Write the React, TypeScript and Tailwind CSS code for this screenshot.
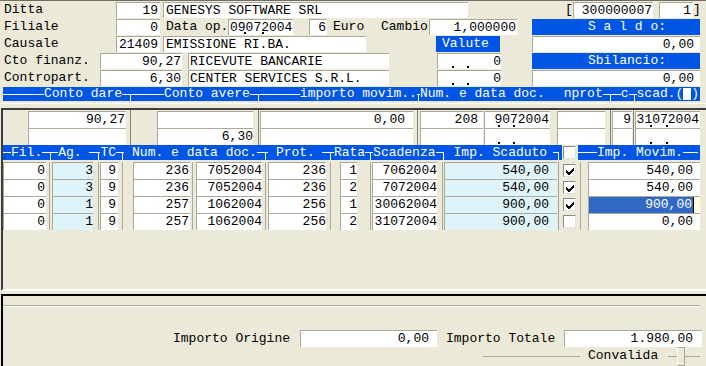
import React from "react";

type P = { className?: string; children?: React.ReactNode };

const BLUE = "bg-[#0055e5]";

function Row({ children }: P) {
  return <div className="flex h-[17px]">{children}</div>;
}

function Label({ className = "", children }: P) {
  return <div className={`h-[16px] shrink-0 whitespace-pre leading-[16px] ${className}`}>{children}</div>;
}

function Box({ className = "", h = "h-[16px]", children }: P & { h?: string }) {
  return (
    <div
      className={`relative shrink-0 whitespace-pre border-l border-t border-[#aca899] bg-white leading-[15px] ${h} ${className}`}
    >
      {children}
    </div>
  );
}

function Bar({ className = "", children }: P) {
  return (
    <div className={`h-[16px] w-[168px] shrink-0 whitespace-pre pl-[56px] leading-[16px] text-white ${BLUE} ${className}`}>
      {children}
    </div>
  );
}

// puntini della maschera data
function Dot({ className }: { className: string }) {
  return <span className={`absolute bottom-[1px] h-[2px] w-[2px] bg-black ${className}`} />;
}

// pezzi delle intestazioni di griglia
function Ln({ className = "" }: { className?: string }) {
  return <div className={`h-px shrink-0 self-center bg-white ${className}`} />;
}
function Tk() {
  return <div className="mt-[7px] w-px shrink-0 self-stretch bg-white" />;
}
function Tx({ children }: P) {
  return <span className="shrink-0 whitespace-pre">{children}</span>;
}
function Sp({ className }: { className: string }) {
  return <div className={`shrink-0 ${className}`} />;
}

function Check({ on }: { on?: boolean }) {
  return (
    <div className="flex h-[13px] w-[13px] items-center justify-center border border-[#8a8a8a] border-b-[#e2e2e2] border-r-[#e2e2e2] bg-white">
      {on ? (
        <svg width="8" height="8" viewBox="0 0 7 7" shapeRendering="crispEdges">
          <path d="M0 2.6 L2.4 5 L7 0.4 L7 2.8 L2.4 7.3 L0 4.9 Z" fill="black" />
        </svg>
      ) : null}
    </div>
  );
}

function MCell({ className = "", children }: P) {
  return (
    <div
      className={`relative h-[17px] shrink-0 whitespace-pre border-l border-t border-[#aca899] bg-white text-right leading-[16px] ${className}`}
    >
      {children}
    </div>
  );
}

function Gap({ className, pre }: { className: string; pre: string }) {
  return (
    <div className={`flex shrink-0 ${className}`}>
      <div className={`shrink-0 ${pre}`} />
      <div className="w-px bg-[#aca899]" />
    </div>
  );
}

function C({ className = "", bg = "bg-white", children }: P & { bg?: string }) {
  return (
    <div
      className={`h-[17px] shrink-0 whitespace-pre border-l border-t border-[#aca899] text-right leading-[16px] ${bg} ${className}`}
    >
      {children}
    </div>
  );
}

type Rata = {
  ag: string;
  num: string;
  data: string;
  prot: string;
  rata: string;
  scad: string;
  imp: string;
  chk: boolean;
  mov: string;
  sel?: boolean;
};

const rate: Rata[] = [
  { ag: "3", num: "236", data: "7052004", prot: "236", rata: "1", scad: "7062004", imp: "540,00", chk: true, mov: "540,00" },
  { ag: "3", num: "236", data: "7052004", prot: "236", rata: "2", scad: "7072004", imp: "540,00", chk: true, mov: "540,00" },
  { ag: "1", num: "257", data: "1062004", prot: "256", rata: "1", scad: "30062004", imp: "900,00", chk: true, mov: "900,00", sel: true },
  { ag: "1", num: "257", data: "1062004", prot: "256", rata: "2", scad: "31072004", imp: "900,00", chk: false, mov: "0,00" },
];

const CYAN = "bg-[#dff4f9]";

function RataRow({ r }: { r: Rata }) {
  return (
    <div className="flex h-[17px]">
      <C className="w-[43px] pr-[1px]">0</C>
      <Gap className="w-[6px]" pre="w-[3px]" />
      <C className="w-[41px]" bg={CYAN}>
        {r.ag}
      </C>
      <Gap className="w-[7px]" pre="w-[5px]" />
      <C className="w-[18px] pr-[2px]">9</C>
      <Gap className="w-[15px]" pre="w-[4px]" />
      <C className="w-[57px] pr-[1px]">{r.num}</C>
      <Gap className="w-[6px]" pre="w-[2px]" />
      <C className="w-[66px]">{r.data}</C>
      <Gap className="w-[6px]" pre="w-[3px]" />
      <C className="w-[58px]">{r.prot}</C>
      <Gap className="w-[14px]" pre="w-[4px]" />
      <C className="w-[17px]">{r.rata}</C>
      <Gap className="w-[15px]" pre="w-[13px]" />
      <C className="w-[65px]">{r.scad}</C>
      <Gap className="w-[7px]" pre="w-[5px]" />
      <C className="w-[113px] pr-[8px]" bg={CYAN}>
        {r.imp}
      </C>
      <Gap className="w-[5px]" pre="w-[1px]" />
      <div className="w-[16px] shrink-0 pl-[1px] pt-[2px]">
        <Check on={r.chk} />
      </div>
      <Gap className="w-[10px]" pre="w-[2px]" />
      {r.sel ? (
        <div className="flex h-[17px] w-[112px] shrink-0 border-l border-t border-[#aca899]">
          <div className="w-[104px] bg-[#316ac5] pr-[1px] text-right leading-[16px] text-white">{r.mov}</div>
          <div className="w-px bg-black" />
          <div className="flex-1 bg-[#ffffe1]" />
        </div>
      ) : (
        <C className="w-[112px] pr-[7px]">{r.mov}</C>
      )}
    </div>
  );
}

export default function App() {
  return (
    <div className="h-[366px] w-[706px] overflow-hidden border-t border-[#716f64] bg-[#ece9d8] font-['Liberation_Mono',monospace] text-[13px] text-black">
      {/* testata */}
      <div className="pt-px">
        <Row>
          <Label className="w-[116px] pl-[4px]">Ditta</Label>
          <Box className="w-[44px] pr-[2px] text-right">19</Box>
          <Box className="ml-[3px] w-[305px] pl-[2px]">GENESYS SOFTWARE SRL</Box>
          <Label className="ml-[97px] w-[8px]">[</Label>
          <Box className="w-[80px] pr-[1px] text-right">300000007</Box>
          <Box className="ml-[6px] w-[34px] pr-[2px] text-right">1</Box>
          <Label className="w-[8px]">]</Label>
        </Row>
        <Row>
          <Label className="w-[116px] pl-[4px]">Filiale</Label>
          <Box className="w-[44px] pr-[2px] text-right">0</Box>
          <Label className="ml-[6px] w-[62px]">Data op.</Label>
          <Box className="w-[65px] pl-[1px]">
            09072004
            <Dot className="left-[15px]" />
            <Dot className="left-[33px]" />
          </Box>
          <Box className="ml-[16px] w-[18px] pr-[1px] text-right">6</Box>
          <Label className="ml-[6px] w-[48px]">Euro</Label>
          <Label className="w-[48px]">Cambio</Label>
          <Box className="w-[88px] pr-[1px] text-right">1,000000</Box>
          <Bar className="ml-[15px]">S a l d o:</Bar>
        </Row>
        <Row>
          <Label className="w-[116px] pl-[4px]">Causale</Label>
          <Box className="w-[44px] pr-[2px] text-right">21409</Box>
          <Box className="ml-[3px] w-[203px] pl-[2px]">EMISSIONE RI.BA.</Box>
          <div className={`ml-[70px] h-[16px] w-[64px] shrink-0 pl-[6px] leading-[16px] text-white ${BLUE}`}>Valute</div>
          <Box className="ml-[32px] w-[168px] pr-[6px] text-right">0,00</Box>
        </Row>
        <Row>
          <Label className="w-[100px] pl-[4px]">Cto finanz.</Label>
          <Box className="w-[82px] pr-[1px] text-right">90,27</Box>
          <Box className="ml-[6px] w-[201px] pl-[1px]">RICEVUTE BANCARIE</Box>
          <Box className="ml-[48px] w-[64px] text-right">
            0
            <Dot className="left-[14px]" />
            <Dot className="left-[29px]" />
          </Box>
          <Bar className="ml-[31px]">Sbilancio:</Bar>
        </Row>
        <Row>
          <Label className="w-[100px] pl-[4px]">Contropart.</Label>
          <Box className="w-[82px] pr-[1px] text-right">6,30</Box>
          <Box className="ml-[6px] w-[201px] pl-[1px]">CENTER SERVICES S.R.L.</Box>
          <Box className="ml-[48px] w-[64px] text-right">
            0
            <Dot className="left-[14px]" />
            <Dot className="left-[29px]" />
          </Box>
          <Box className="ml-[31px] w-[168px] pr-[6px] text-right">0,00</Box>
        </Row>
      </div>

      {/* intestazione conti */}
      <div className={`ml-[3px] flex h-[14px] w-[697px] leading-[14px] text-white ${BLUE}`}>
        <Ln className="w-[41px]" />
        <Tx>Conto dare</Tx>
        <Ln className="w-[8px]" />
        <Tk />
        <Ln className="w-[33px]" />
        <Tx>Conto avere</Tx>
        <Ln className="w-[8px]" />
        <Tk />
        <Ln className="w-[41px]" />
        <Tx>importo movim..</Tx>
        <Ln className="w-[1px]" />
        <Tk />
        <Ln className="w-[1px]" />
        <Tx>Num. e data doc.</Tx>
        <Sp className="w-[19px]" />
        <Tx>nprot</Tx>
        <Ln className="w-[7px]" />
        <Tk />
        <Ln className="w-[10px]" />
        <Tx>c</Tx>
        <Ln className="w-[5px]" />
        <Tk />
        <Ln className="w-[2px]" />
        <Tx>scad.(</Tx>
        <div className="my-px w-[8px] shrink-0 bg-white" />
        <Tx>)</Tx>
      </div>

      <div className="h-[7px] pt-[2px]">
        <div className="h-px bg-white" />
      </div>

      {/* griglia */}
      <div className="ml-[1px] h-[183px] border-b-2 border-l-2 border-t-2 border-[#3d3d3d] border-b-white">
        <div className="flex h-[35px]">
          <div className="ml-[25px] flex flex-col pt-px">
            <MCell className="w-[98px] pr-[1px]">90,27</MCell>
            <MCell className="w-[98px]" />
          </div>
          <div className="ml-[4px] w-px bg-[#808080]" />
          <div className="ml-[26px] flex flex-col pt-px">
            <MCell className="w-[96px]" />
            <MCell className="w-[96px]">6,30</MCell>
          </div>
          <div className="ml-[5px] w-px bg-[#808080]" />
          <div className="ml-[1px] flex flex-col pt-px">
            <MCell className="w-[153px] pr-[8px]">0,00</MCell>
            <MCell className="w-[153px]" />
          </div>
          <div className="ml-[4px] w-px bg-[#808080]" />
          <div className="ml-[2px] flex flex-col pt-px">
            <MCell className="w-[63px] pr-[5px]">208</MCell>
            <MCell className="w-[63px]" />
          </div>
          <div className="ml-[1px] flex flex-col pt-px">
            <MCell className="w-[66px] pr-[1px]">
              9072004
              <Dot className="right-[50px]" />
              <Dot className="right-[35px]" />
            </MCell>
            <MCell className="w-[66px]">
              <Dot className="right-[50px]" />
              <Dot className="right-[35px]" />
            </MCell>
          </div>
          <div className="ml-[7px] flex flex-col pt-px">
            <MCell className="w-[48px]" />
            <MCell className="w-[48px]" />
          </div>
          <div className="ml-[5px] w-px bg-[#808080]" />
          <div className="ml-[1px] flex flex-col pt-px">
            <MCell className="w-[20px] pr-[1px]">9</MCell>
            <MCell className="w-[20px]" />
          </div>
          <div className="ml-[1px] w-px bg-[#808080]" />
          <div className="ml-[1px] flex flex-col pt-px">
            <MCell className="w-[65px] pr-[1px]">
              31072004
              <Dot className="right-[48px]" />
              <Dot className="right-[32px]" />
            </MCell>
            <MCell className="w-[65px]">
              <Dot className="right-[48px]" />
              <Dot className="right-[32px]" />
            </MCell>
          </div>
        </div>

        {/* intestazione rate */}
        <div className="flex h-[15px] leading-[15px] text-white">
          <div className={`flex w-[559px] shrink-0 ${BLUE}`}>
            <Ln className="w-[8px]" />
            <Tx>Fil.</Tx>
            <Ln className="w-[8px]" />
            <Tk />
            <Ln className="w-[7px]" />
            <Tx>Ag. </Tx>
            <Ln className="w-[9px]" />
            <Tk />
            <Ln className="w-[1px]" />
            <Tx>TC</Tx>
            <Ln className="w-[6px]" />
            <Tk />
            <Ln className="w-[1px]" />
            <Sp className="w-[8px]" />
            <Tx>Num. e data doc.</Tx>
            <Ln className="w-[8px]" />
            <Tk />
            <Ln className="w-[2px]" />
            <Sp className="w-[8px]" />
            <Tx>Prot.</Tx>
            <Sp className="w-[7px]" />
            <Ln className="w-[8px]" />
            <Tk />
            <Ln className="w-[3px]" />
            <Tx>Rata</Tx>
            <Ln className="w-[5px]" />
            <Tk />
            <Ln className="w-[2px]" />
            <Tx>Scadenza</Tx>
            <Ln className="w-[7px]" />
            <Tk />
            <Sp className="w-[10px]" />
            <Tx>Imp. Scaduto</Tx>
            <Sp className="w-[6px]" />
            <Ln className="w-[5px]" />
            <Tk />
          </div>
          <div className="w-[16px] shrink-0 pl-[1px] pt-px">
            <Check />
          </div>
          <div className={`flex w-[122px] shrink-0 ${BLUE}`}>
            <Ln className="w-[19px]" />
            <Tx>Imp. Movim.</Tx>
            <Ln className="w-[15px]" />
          </div>
        </div>

        <div className="mt-[2px]">
          {rate.map((r, i) => (
            <RataRow key={i} r={r} />
          ))}
        </div>
      </div>

      <div className="h-[3px]" />

      {/* totali */}
      <div className="ml-[1px] h-[72px] border-l-2 border-t-2 border-black">
        <div className="mt-[9px] w-[697px] border-b border-t border-b-white border-t-[#aca899]" />
        <div className="mt-[23px] flex h-[17px]">
          <div className="ml-[170px] w-[127px] shrink-0 whitespace-pre leading-[17px]">Importo Origine</div>
          <Box h="h-[17px]" className="w-[137px] pr-[8px] text-right leading-[16px]">
            0,00
          </Box>
          <div className="ml-[9px] w-[118px] shrink-0 whitespace-pre leading-[17px]">Importo Totale</div>
          <Box h="h-[17px]" className="w-[138px] pr-[9px] text-right leading-[16px]">
            1.980,00
          </Box>
        </div>
        <div className="flex h-[19px]">
          <div className="ml-[480px] mt-[9px] h-px w-[97px] shrink-0 bg-[#aca899]" />
          <div className="ml-[8px] mt-px shrink-0 whitespace-pre leading-[16px]">Convalida</div>
          <div className="ml-[10px] mt-[9px] h-px w-[9px] shrink-0 bg-[#aca899]" />
          <div className="w-[8px] shrink-0 border border-[#aca899] border-l-white" />
          <div className="mt-[9px] h-px w-[15px] shrink-0 bg-[#aca899]" />
        </div>
      </div>
    </div>
  );
}
